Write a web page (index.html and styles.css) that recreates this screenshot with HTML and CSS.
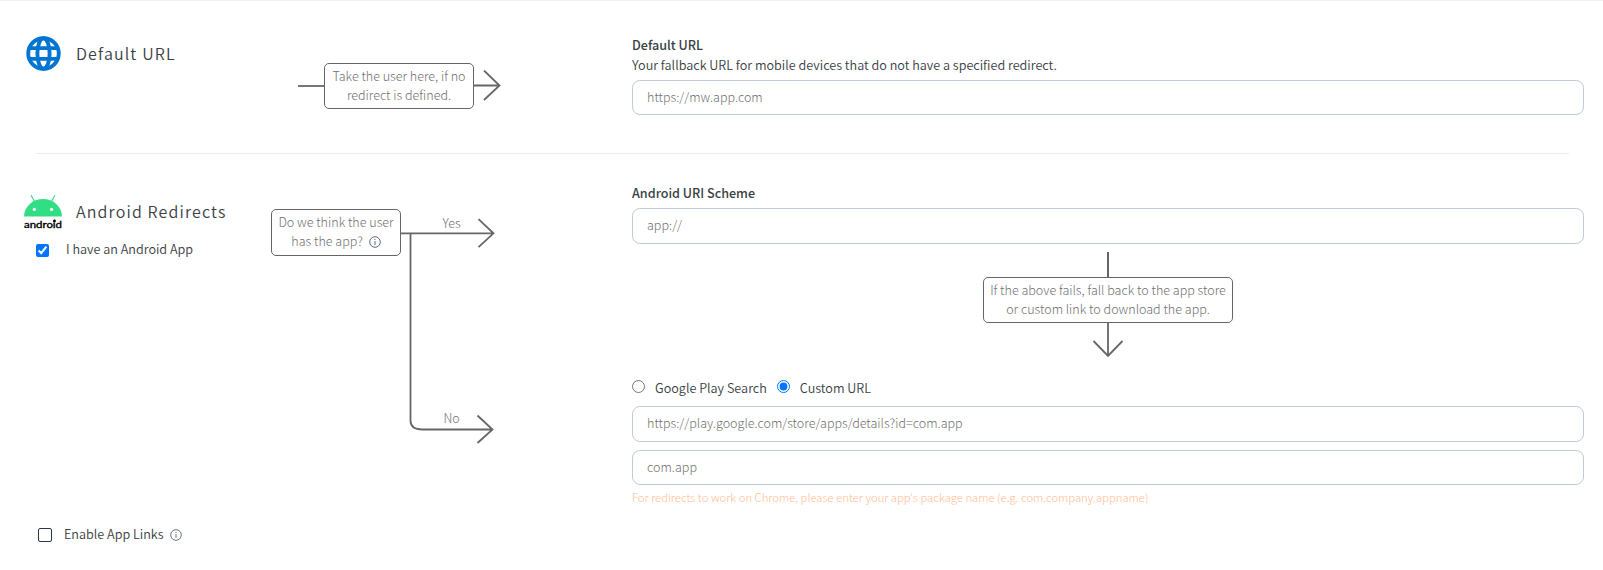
FILE: index.html
```html
<!DOCTYPE html>
<html lang="en">
<head>
<meta charset="utf-8">
<title>Redirects</title>
<link rel="stylesheet" href="styles.css">
</head>
<body>
<main class="page">
  <section class="row row-default">
    <div class="side">
      <div class="heading">
        <svg class="globe" width="35" height="35" viewBox="0 0 36 36" fill="none" stroke="#0075d1" stroke-width="4">
          <circle cx="18" cy="18" r="15.700"/>
          <ellipse cx="18" cy="18" rx="6.300" ry="15.700"/>
          <path d="M3.500 12.500h29M3.500 23.500h29"/>
        </svg>
        <h2>Default URL</h2>
      </div>
    </div>
    <div class="flow flow-default">
      <span class="stem"></span>
      <p class="note note-default">Take the user here, if no<br>redirect is defined.</p>
      <svg width="27" height="32" viewBox="0 0 27 32" fill="none" stroke="#666" stroke-width="1.800">
        <path d="M0 15.500h25M10 .5l15.500 15L10 30"/>
      </svg>
    </div>
    <div class="fields">
      <label class="label" for="default-url">Default URL</label>
      <p class="help">Your fallback URL for mobile devices that do not have a specified redirect.</p>
      <input id="default-url" class="input" type="text" value="https://mw.app.com">
    </div>
  </section>
  <hr class="rule">
  <section class="row row-android">
    <div class="side">
      <div class="heading heading-android">
        <svg class="android" width="40" height="36" viewBox="0 0 40 36">
          <path d="M1 22.500a19 17.500 0 0 1 38 0z" fill="#32de84"/>
          <path d="M8 1.300l4 7M32 1.300l-4 7" stroke="#32de84" stroke-width="1.200"/>
          <circle cx="11.300" cy="15.400" r="1.600" fill="#fff"/>
          <circle cx="28.600" cy="15.400" r="1.600" fill="#fff"/>
          <text class="wordmark" x="1" y="34" textLength="38" lengthAdjust="spacingAndGlyphs">android</text>
          <circle cx="31.500" cy="27" r="1.400"/>
        </svg>
        <h2>Android Redirects</h2>
      </div>
      <label class="check check-app"><input type="checkbox" checked><span>I have an Android App</span></label>
      <div class="check check-links">
        <input class="box" type="checkbox" id="links"><label for="links">Enable App Links</label>
        <svg class="info" width="12" height="12" viewBox="0 0 12 12" fill="none" stroke="#66727f"><circle cx="6" cy="6" r="5.300"/><path d="M6 5v4M6 2.800v1.200"/></svg>
      </div>
    </div>
    <div class="flow flow-android">
      <p class="note note-android">Do we think the user<br>has the app? <svg class="info info-note" width="12" height="12" viewBox="0 0 12 12" fill="none" stroke="#5f6b78"><circle cx="6" cy="6" r="5.300"/><path d="M6 5v4M6 2.800v1.200"/></svg></p>
      <svg class="branch" width="95" height="238" viewBox="0 0 95 238" fill="none" stroke="#666" stroke-width="1.800">
        <path d="M0 19.300h92M77.500 5.200l15 14.100-15 13.900"/>
        <path d="M9.500 19.300v187.200q0 9 12 9h70M76.500 201.500l15 14-15 13.500"/>
        <text class="branch-text" x="41.500" y="14">Yes</text>
        <text class="branch-text" x="42.500" y="209">No</text>
      </svg>
    </div>
    <div class="fields">
      <label class="label" for="scheme">Android URI Scheme</label>
      <input id="scheme" class="input input-tall" type="text" value="app://">
      <div class="fallback">
        <span class="stem-down"></span>
        <p class="note note-fallback">If the above fails, fall back to the app store<br>or custom link to download the app.</p>
        <svg width="32" height="35" viewBox="0 0 32 35" fill="none" stroke="#666" stroke-width="1.800"><path d="M16 0v33M1.500 18L16 33l14.500-15"/></svg>
      </div>
      <div class="radios">
        <label><input type="radio" name="store"><span>Google Play Search</span></label>
        <label><input type="radio" name="store" checked><span>Custom URL</span></label>
      </div>
      <input class="input input-tall" type="text" value="https://play.google.com/store/apps/details?id=com.app">
      <input class="input input-package" type="text" value="com.app">
      <p class="hint">For redirects to work on Chrome, please enter your app's package name (e.g. com.company.appname)</p>
    </div>
  </section>
</main>
</body>
</html>
```
FILE: styles.css
```css
* { box-sizing: border-box; }
body {
  margin: 0;
  background: #fff;
  color: #3a3f45;
  font: 350 12.64px/20px "Noto Sans CJK SC", "Open Sans", sans-serif;
}
h2, p { margin: 0; }
svg { display: block; flex: none; }
.page { height: 570px; border-top: 1px solid #edf1f5; overflow: hidden; }
.row { display: grid; grid-template-columns: 271px 361px 952px; }
.row-default { height: 152px; }
.rule { height: 1px; margin: 0 34px 0 36px; border: 0; background: #ececec; }
.heading { display: flex; align-items: center; gap: 15px; padding: 35px 0 0 26px; }
.heading h2 { margin-top: -2px; font-size: 16px; line-height: 24px; font-weight: 350; letter-spacing: 1.15px; }
.heading-android { gap: 13px; padding: 40px 0 0 23px; }
.wordmark { font: 400 9.6px "Lato", sans-serif; fill: #000; stroke: #000; stroke-width: 0.35px; }
.flow { display: flex; align-items: flex-start; }
.flow-default { align-items: center; height: 46px; margin: 62px 0 0 27px; }
.stem { width: 26px; height: 2px; background: #777; }
.note {
  flex: none;
  border: 1px solid #666;
  border-radius: 5px;
  padding: 2px 0;
  font-size: 12.55px;
  font-weight: 300;
  line-height: 19px;
  text-align: center;
  color: #707070;
  white-space: nowrap;
}
.note-default { width: 150px; height: 46px; }
.note-android { width: 130px; height: 47px; }
.note-fallback { width: 250px; height: 46px; }
.flow-android { padding-top: 55px; }
.branch { margin-top: 5px; }
.branch-text { font-size: 12.5px; font-weight: 300; fill: #707070; stroke: none; }
.info-note { display: inline-block; vertical-align: -2px; margin-left: 3px; }
.fields { display: flex; flex-direction: column; }
.row-default .fields { padding-top: 34px; }
.row-android .fields { padding-top: 29px; }
.label { font-size: 12.6px; font-weight: 500; line-height: 20px; }
.help { line-height: 20px; margin-bottom: 5px; }
.input {
  width: 952px;
  height: 35px;
  padding: 0 14px 2px;
  border: 1px solid #c0cad8;
  border-radius: 8px;
  background: #fff;
  color: #707070;
  font: inherit;
  font-size: 12.55px;
  font-weight: 300;
  outline: 0;
}
.input-tall { height: 36px; padding-bottom: 3px; }
.row-android .label { margin-bottom: 5px; }
.fallback { display: flex; flex-direction: column; align-items: center; padding-top: 8px; }
.stem-down { width: 2px; height: 25px; background: #666; }
.radios { display: flex; gap: 10px; height: 26px; margin-top: 22px; }
.radios label { display: flex; }
.radios input { width: 13px; height: 13px; margin: 0 10px 0 0; accent-color: #0075ff; }
.radios span { margin-top: -2px; }
.input-package { margin-top: 8px; }
.hint { color: #ffbd94; font-size: 11.3px; font-weight: 300; line-height: 18px; margin-top: 3px; }
.check { display: flex; align-items: center; }
.check input { width: 13px; height: 13px; margin: 0; flex: none; }
.check span, .check label { margin-top: -2px; }
.check-app { gap: 17px; padding: 11px 0 0 36px; }
.check-links { padding: 267px 0 0 38px; }
.check-links .box { appearance: none; width: 14px; height: 14px; margin-right: 12px; border: 1px solid #2c3745; border-radius: 2px; }
.check-links .info { margin-left: 6px; }
```
